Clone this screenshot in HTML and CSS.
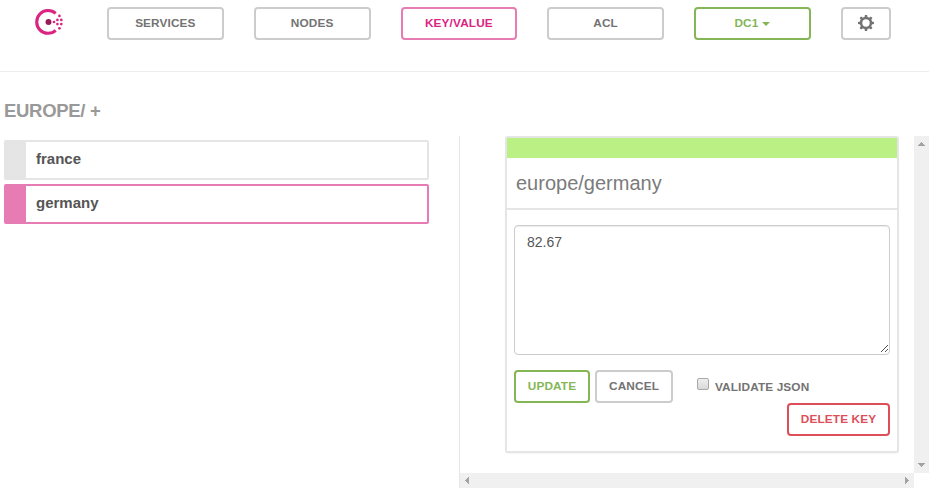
FILE: index.html
```
<!DOCTYPE html>
<html lang="en">
<head>
<meta charset="utf-8">
<title>Consul</title>
<link rel="stylesheet" href="styles.css">
</head>
<body>
<header class="topbar">
  <svg class="logo" width="30" height="30" viewBox="0 0 30 30">
    <path d="M21.7 6.4A11.4 11.4 0 1 0 21.7 23.4" fill="none" stroke="#dc2382" stroke-width="3.1"/>
    <circle cx="14.5" cy="15" r="3" fill="#961d59"/>
    <g fill="#dc2382"><circle cx="20" cy="15" r="1.35"/><circle cx="23.4" cy="12.9" r="1.35"/><circle cx="23.4" cy="17.1" r="1.35"/><circle cx="27.3" cy="12.9" r="1.35"/><circle cx="27.3" cy="17.1" r="1.35"/><circle cx="25.4" cy="8.9" r="1.35"/><circle cx="25.4" cy="21.3" r="1.35"/></g>
  </svg>
  <nav class="nav">
    <a class="btn">SERVICES</a>
    <a class="btn">NODES</a>
    <a class="btn btn-active">KEY/VALUE</a>
    <a class="btn">ACL</a>
    <a class="btn btn-green">DC1 <span class="caret"></span></a>
    <a class="btn btn-icon" aria-label="Settings">
      <svg width="16" height="16" viewBox="0 0 16 16"><circle cx="8" cy="8" r="4.95" fill="none" stroke="#737373" stroke-width="2.5"/><g fill="#737373"><path id="tooth" d="M6.9 0h2.2l.5 3H6.4z"/><use href="#tooth" transform="rotate(45 8 8)"/><use href="#tooth" transform="rotate(90 8 8)"/><use href="#tooth" transform="rotate(135 8 8)"/><use href="#tooth" transform="rotate(180 8 8)"/><use href="#tooth" transform="rotate(225 8 8)"/><use href="#tooth" transform="rotate(270 8 8)"/><use href="#tooth" transform="rotate(315 8 8)"/></g></svg>
    </a>
  </nav>
</header>
<main class="content">
  <section class="browser">
    <h4 class="path">EUROPE/ +</h4>
    <div class="item"><span class="item-bar"></span><span class="item-name">france</span></div>
    <div class="item item-active"><span class="item-bar"></span><span class="item-name">germany</span></div>
  </section>
  <section class="detail">
    <div class="view">
      <div class="panel">
        <div class="panel-bar"></div>
        <div class="panel-title">europe/germany</div>
        <div class="panel-body">
          <div class="value"><span>82.67</span>
            <svg class="grip" width="8" height="8" viewBox="0 0 8 8" shape-rendering="crispEdges"><path d="M.5 7.5l7-7M4.5 7.5l3-3" stroke="#555" fill="none"/></svg>
          </div>
          <div class="actions">
            <a class="btn btn-green update">UPDATE</a>
            <a class="btn cancel">CANCEL</a>
            <span class="check"></span><span class="check-label">VALIDATE JSON</span>
          </div>
          <a class="btn btn-red delete">DELETE KEY</a>
        </div>
      </div>
    </div>
    <div class="vscroll">
      <svg width="7" height="4" viewBox="0 0 7 4" shape-rendering="crispEdges"><path d="M3 0h1v1h1v1h1v1h1v1H0V3h1V2h1V1h1z"/></svg>
      <svg width="7" height="4" viewBox="0 0 7 4" shape-rendering="crispEdges"><path d="M0 0h7v1H6v1H5v1H4v1H3V3H2V2H1V1H0z"/></svg>
    </div>
    <div class="hscroll">
      <svg width="4" height="7" viewBox="0 0 4 7" shape-rendering="crispEdges"><path d="M4 0v7H3V6H2V5H1V4H0V3h1V2h1V1h1V0z"/></svg>
      <svg width="4" height="7" viewBox="0 0 4 7" shape-rendering="crispEdges"><path d="M0 0v7h1V6h1V5h1V4h1V3H3V2H2V1H1V0z"/></svg>
    </div>
  </section>
</main>
</body>
</html>
```
FILE: styles.css
```
* { box-sizing: border-box; }
body { margin: 0; background: #fff; font-family: "Liberation Sans", Arial, sans-serif; color: #555; overflow: hidden; }
svg { display: block; }

.topbar { display: flex; width: 929px; height: 72px; padding: 7px 0 0 34px; border-bottom: 1px solid #eee; }
.logo { margin-right: 43px; }
.nav { display: flex; gap: 30px; }
.nav .btn { width: 116.75px; }
.nav .btn-icon { width: 50px; }

.btn { display: flex; align-items: center; justify-content: center; height: 33px; padding-bottom: 1px; border: 2px solid #ccc; border-radius: 4px; background: #fff; color: #737373; font-size: 11.8px; letter-spacing: .13px; font-weight: bold; white-space: nowrap; }
.btn-active { border-color: #e77bb3; color: #dc2382; }
.btn-green { border-color: #84b657; color: #84b657; }
.btn-red { border-color: #dd4e58; color: #dd4e58; }
.caret { margin: 2px 0 0 4px; border: 4px solid transparent; border-top-color: currentColor; border-bottom: 0; }
.nav .btn-icon { padding-bottom: 1px; }

.content { display: flex; width: 929px; }
.browser { width: 429px; padding-left: 4px; }
.path { margin: 28px 0 19px; font-size: 18.5px; letter-spacing: -.3px; line-height: 21px; color: #999; }
.item { display: flex; height: 40px; margin-bottom: 4px; border: 2px solid #e5e5e5; border-radius: 2px; }
.item-bar { width: 20px; background: #e5e5e5; }
.item-name { padding-left: 10px; font-size: 15px; line-height: 34px; font-weight: bold; }
.item-active { border-color: #e77bb3; }
.item-active .item-bar { background: #e77bb3; }

.detail { display: grid; grid-template: 337px 15px / 454px 15px; margin: 64px 0 0 30px; border-left: 1px solid #e5e5e5; }
.view { padding-left: 45px; }
.panel { width: 394px; height: 317px; border: 2px solid #e5e5e5; border-radius: 3px; box-shadow: 0 1px 1px rgba(0,0,0,.04); }
.panel-bar { height: 20px; background: #bbf085; }
.panel-title { height: 52px; padding-left: 9px; border-bottom: 2px solid #e5e5e5; font-size: 20px; line-height: 50px; color: #7b7b7b; }
.panel-body { padding: 15px 7px 0; }
.value { display: flex; justify-content: space-between; height: 130px; padding: 8px 1px 0 12px; border: 1px solid #ccc; border-radius: 4px; box-shadow: inset 0 1px 1px rgba(0,0,0,.075); font-size: 14px; line-height: 16px; }
.grip { align-self: flex-end; margin-bottom: 1px; }
.actions { display: flex; margin-top: 15px; }
.update { width: 76px; margin-right: 5px; }
.cancel { width: 78px; margin-right: 24px; }
.check { width: 12px; height: 12px; margin: 8px 6px 0 0; border: 1px solid #a9a9a9; border-radius: 2px; background: linear-gradient(#eee, #d9d9d9); }
.check-label { color: #737373; font-size: 11.8px; letter-spacing: .13px; line-height: 34px; font-weight: bold; }
.actions, .actions .btn { height: 33px; }
.delete { width: 103px; margin-left: auto; }
.vscroll, .hscroll { display: flex; justify-content: space-between; align-items: center; background: #f0f0f0; fill: #a3a3a3; }
.vscroll { flex-direction: column; padding: 6px 0; }
.hscroll { padding: 0 5px; }
```
